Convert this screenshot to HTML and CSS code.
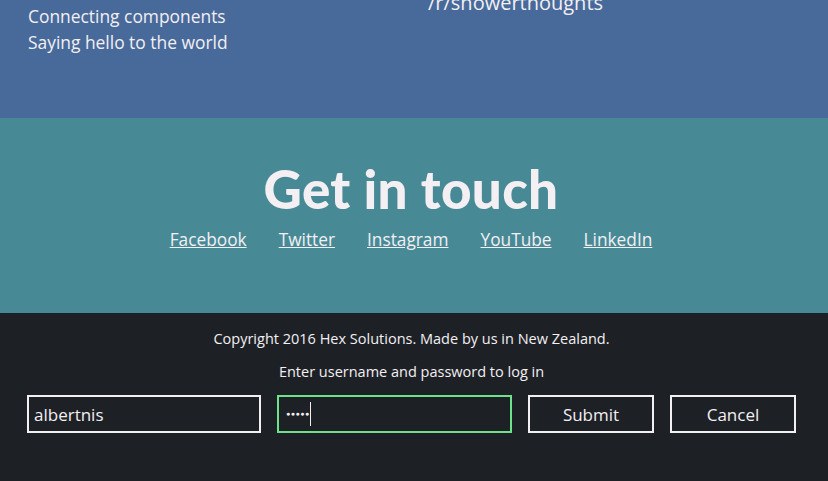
FILE: index.html
```html
<!DOCTYPE html>
<html>
<head>
<meta charset="utf-8">
<link rel="stylesheet" href="styles.css">
</head>
<body>
<section class="about">
  <ul class="col col-left">
    <li>Connecting components</li>
    <li>Saying hello to the world</li>
  </ul>
  <ul class="col col-right">
    <li>/r/showerthoughts</li>
  </ul>
</section>
<section class="contact">
  <h2 class="contact-title">Get in touch</h2>
  <nav class="social">
    <a href="#">Facebook</a>
    <a href="#">Twitter</a>
    <a href="#">Instagram</a>
    <a href="#">YouTube</a>
    <a href="#">LinkedIn</a>
  </nav>
</section>
<footer class="footer">
  <p class="copyright">Copyright 2016 Hex Solutions. Made by us in New Zealand.</p>
  <p class="login-hint">Enter username and password to log in</p>
  <form class="login">
    <input class="field" type="text" value="albertnis">
    <div class="field field-active"><span class="dots">&#9679;&#9679;&#9679;&#9679;&#9679;</span><span class="caret"></span></div>
    <button class="btn" type="button">Submit</button>
    <button class="btn" type="button">Cancel</button>
  </form>
</footer>
</body>
</html>
```
FILE: styles.css
```css
html, body {
  margin: 0;
  padding: 0;
}
body {
  font-family: "Open Sans", "Liberation Sans", sans-serif;
  color: #f3eff3;
  background: #1d2125;
  overflow: hidden;
}
.about {
  background: #476a9a;
  height: 118px;
  display: flex;
  overflow: hidden;
}
.col {
  list-style: none;
  margin: 0;
  padding: 0;
}
.col-left {
  width: 400px;
  padding: 3px 0 0 28px;
  font-size: 17.4px;
  line-height: 26px;
}
.col-right {
  margin-top: -10px;
  font-size: 20px;
  line-height: 26px;
}
.contact {
  background: #478a96;
  height: 195px;
  display: flex;
  flex-direction: column;
  align-items: center;
  padding-right: 6px;
  box-sizing: border-box;
}
.contact-title {
  margin: 41px 0 0;
  font-family: Lato, "Open Sans", sans-serif;
  font-weight: 900;
  font-size: 53px;
  line-height: 60px;
  letter-spacing: 0.3px;
}
.social {
  display: flex;
  gap: 32px;
  margin-top: 9px;
  font-size: 17.3px;
  line-height: 24px;
}
.social a {
  color: #f3eff3;
  text-decoration: underline;
}
.footer {
  padding: 16px 32px 0 27px;
  display: flex;
  flex-direction: column;
  align-items: center;
}
.copyright, .login-hint {
  margin: 0;
  font-size: 14.5px;
  line-height: 20px;
}
.login-hint {
  margin-top: 13px;
}
.login {
  margin-top: 13px;
  display: flex;
  gap: 16px;
  width: 100%;
}
.field {
  box-sizing: border-box;
  width: 234px;
  height: 38px;
  border: 2px solid #f3eff3;
  background: transparent;
  color: #f3eff3;
  font-family: inherit;
  font-size: 17px;
  padding: 0 5px;
  margin: 0;
  outline: none;
}
.field-active {
  width: 235px;
  border-color: #6ce28a;
  display: flex;
  align-items: center;
  padding-left: 7px;
}
.dots {
  font-size: 7px;
  letter-spacing: 0.5px;
  line-height: 10px;
}
.caret {
  width: 1px;
  height: 24px;
  background: #f3eff3;
  margin-left: 0;
}
.btn {
  box-sizing: border-box;
  width: 126px;
  height: 38px;
  border: 2px solid #f3eff3;
  background: transparent;
  color: #f3eff3;
  font-family: inherit;
  font-size: 17px;
  margin: 0;
  padding: 0;
}
```
